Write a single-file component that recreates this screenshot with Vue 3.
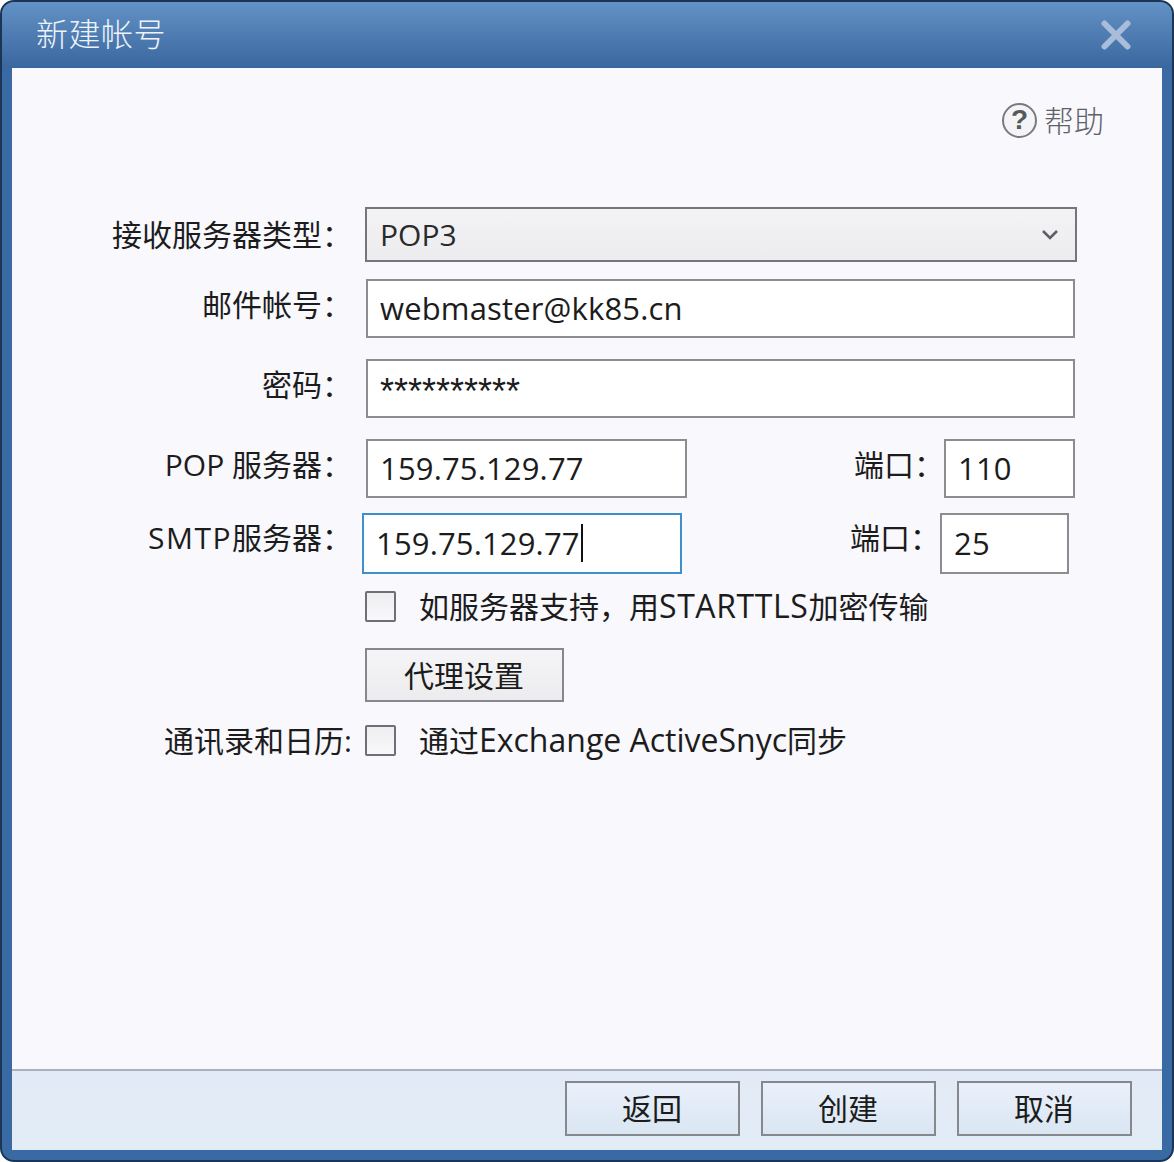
<script setup>
const footerButtons = ["返回", "创建", "取消"];
</script>

<template>
  <div class="window">
    <div class="titlebar">
      <span class="title">新建帐号</span>
      <svg class="close" width="30" height="30" viewBox="0 0 30 30">
        <path d="M3.5 3.5 L26.5 26.5 M26.5 3.5 L3.5 26.5" stroke="#a9bdd8" stroke-width="6" stroke-linecap="round" />
      </svg>
    </div>

    <div class="content">
      <div class="help">
        <span class="help-icon">?</span>
        <span class="help-text">帮助</span>
      </div>

      <div class="form">
        <div class="row row-select">
          <label class="label select-label">接收服务器类型：</label>
          <div class="select">
            <span>POP3</span>
            <svg width="18" height="12" viewBox="0 0 18 12">
              <path d="M2 2 L9 9 L16 2" fill="none" stroke="#5c5f66" stroke-width="2.6" />
            </svg>
          </div>
        </div>

        <div class="row row-mail">
          <label class="label lifted">邮件帐号：</label>
          <div class="field wide">webmaster@kk85.cn</div>
        </div>

        <div class="row row-password">
          <label class="label lifted">密码：</label>
          <div class="field wide password">**********</div>
        </div>

        <div class="row row-pop">
          <label class="label lifted">POP 服务器：</label>
          <div class="field host">159.75.129.77</div>
          <label class="port-label lifted">端口：</label>
          <div class="field port">110</div>
        </div>

        <div class="row row-smtp">
          <label class="label lifted"><span class="smtp">SMTP</span>服务器：</label>
          <div class="field host focused">159.75.129.77<span class="caret"></span></div>
          <label class="port-label lifted">端口：</label>
          <div class="field port">25</div>
        </div>

        <div class="row row-tls">
          <span class="checkbox"></span>
          <span class="check-text">如服务器支持，用<span class="starttls">STARTTLS</span>加密传输</span>
        </div>

        <button class="btn proxy">代理设置</button>

        <div class="row row-sync">
          <label class="sync-label">通讯录和日历:</label>
          <span class="checkbox"></span>
          <span class="check-text">通过<span class="latin">Exchange ActiveSnyc</span>同步</span>
        </div>
      </div>
    </div>

    <div class="footer">
      <button v-for="text in footerButtons" :key="text" class="btn footer-btn">{{ text }}</button>
    </div>
  </div>
</template>

<style scoped>
.window {
  width: 1174px;
  height: 1162px;
  box-sizing: border-box;
  display: flex;
  flex-direction: column;
  padding: 0 10px 10px;
  border: 2px solid #1d3554;
  border-radius: 14px;
  background: #3a6aa3;
  font-family: "Open Sans", "Noto Sans CJK SC", sans-serif;
  font-size: 30px;
  color: #1c1c1c;
  overflow: hidden;
}

.titlebar {
  height: 66px;
  flex: none;
  margin: 0 -10px;
  padding: 0 41px 0 34px;
  display: flex;
  align-items: center;
  justify-content: space-between;
  background: linear-gradient(#6392c6, #3a679e);
}

.title {
  position: relative;
  top: -3px;
  font-family: "Noto Sans CJK SC", sans-serif;
  font-size: 32px;
  font-weight: 300;
  letter-spacing: 0.5px;
  color: #eef3fa;
}

.content {
  flex: 1;
  display: flex;
  flex-direction: column;
  background: #f8f8fd;
}

.help {
  display: flex;
  justify-content: flex-end;
  align-items: center;
  gap: 7px;
  height: 36px;
  margin-top: 34px;
  padding-right: 58px;
  font-family: "Noto Sans CJK SC", sans-serif;
  font-weight: 300;
  color: #5f6368;
}

.help-text {
  position: relative;
  top: -1px;
}

.help-icon {
  width: 35px;
  height: 35px;
  box-sizing: border-box;
  display: flex;
  align-items: center;
  justify-content: center;
  border: 2.5px solid #777b80;
  border-radius: 50%;
  background: #f4f4f6;
  font-family: "Liberation Sans", sans-serif;
  font-size: 28px;
  font-weight: 700;
  color: #55585c;
}

.form {
  margin-top: 69px;
  display: flex;
  flex-direction: column;
}

.row {
  display: flex;
  align-items: center;
}

.label {
  width: 340px;
  flex: none;
  text-align: right;
  white-space: nowrap;
}

.lifted {
  position: relative;
  top: -6px;
}

.select-label {
  position: relative;
  top: -2px;
}

.smtp {
  letter-spacing: 1.5px;
}

.select {
  width: 712px;
  height: 55px;
  box-sizing: border-box;
  margin-left: 13px;
  padding: 0 16px 0 13px;
  display: flex;
  align-items: center;
  justify-content: space-between;
  border: 2px solid #73767b;
  background: linear-gradient(#f3f3f5, #ececef);
  color: #2a2a2a;
}

.field {
  height: 59px;
  box-sizing: border-box;
  padding: 0 12px 2px;
  display: flex;
  align-items: center;
  flex: none;
  border: 2px solid #8b8d91;
  background: #fff;
  font-size: 31px;
  letter-spacing: 0.15px;
  white-space: nowrap;
}

.wide {
  width: 709px;
  margin-left: 14px;
}

.password {
  align-items: flex-start;
  padding-top: 11px;
  font-family: "Liberation Sans", sans-serif;
  font-size: 36px;
  line-height: 40px;
  letter-spacing: 0;
}

.host {
  width: 321px;
  margin-left: 14px;
}

.port-label {
  width: 257px;
  flex: none;
  text-align: right;
  white-space: nowrap;
}

.port {
  width: 131px;
}

.row-mail {
  margin-top: 17px;
}

.row-password,
.row-pop {
  margin-top: 21px;
}

.row-smtp {
  margin-top: 15px;
}

.row-smtp .lifted {
  top: -8px;
}

.row-smtp .host {
  width: 320px;
  height: 61px;
  margin-left: 10px;
}

.row-smtp .port {
  width: 129px;
  height: 61px;
}

.row-smtp .port-label {
  width: 258px;
}

.focused {
  border-color: #3e8fce;
}

.caret {
  width: 2px;
  height: 38px;
  margin-left: 1px;
  background: #111;
}

.row-tls {
  height: 31px;
  margin-top: 17px;
  padding-left: 353px;
}

.checkbox {
  width: 31px;
  height: 31px;
  box-sizing: border-box;
  flex: none;
  border: 2px solid #6d7075;
  border-radius: 2px;
  background: linear-gradient(#eeeef0, #f8f8fa);
}

.check-text {
  position: relative;
  top: -2px;
  margin-left: 23px;
  white-space: nowrap;
}

.sync-label {
  width: 340px;
  flex: none;
  margin-right: 13px;
  position: relative;
  top: -2px;
  text-align: right;
  white-space: nowrap;
}

.starttls {
  font-size: 32px;
  letter-spacing: 0.6px;
}

.latin {
  font-size: 32px;
}

.btn {
  box-sizing: border-box;
  border: 2px solid #85888d;
  font-family: "Noto Sans CJK SC", sans-serif;
  font-size: 30px;
  color: #1c1c1c;
  padding: 0 1px 3px 0;
}

.proxy {
  align-self: flex-start;
  width: 199px;
  height: 54px;
  margin: 26px 0 0 353px;
  background: linear-gradient(#f5f5f7, #ececee);
}

.row-sync {
  height: 31px;
  margin-top: 23px;
}

.footer {
  height: 81px;
  flex: none;
  display: flex;
  justify-content: flex-end;
  gap: 21px;
  box-sizing: border-box;
  padding: 10px 30px 0 0;
  border-top: 2px solid #abb1bf;
  background: linear-gradient(#e3eaf7, #e1ecf5);
}

.footer-btn {
  width: 175px;
  height: 55px;
  background: linear-gradient(#eaf0fb, #d9e6f2);
}
</style>

<style>
body {
  margin: 0;
}
</style>
